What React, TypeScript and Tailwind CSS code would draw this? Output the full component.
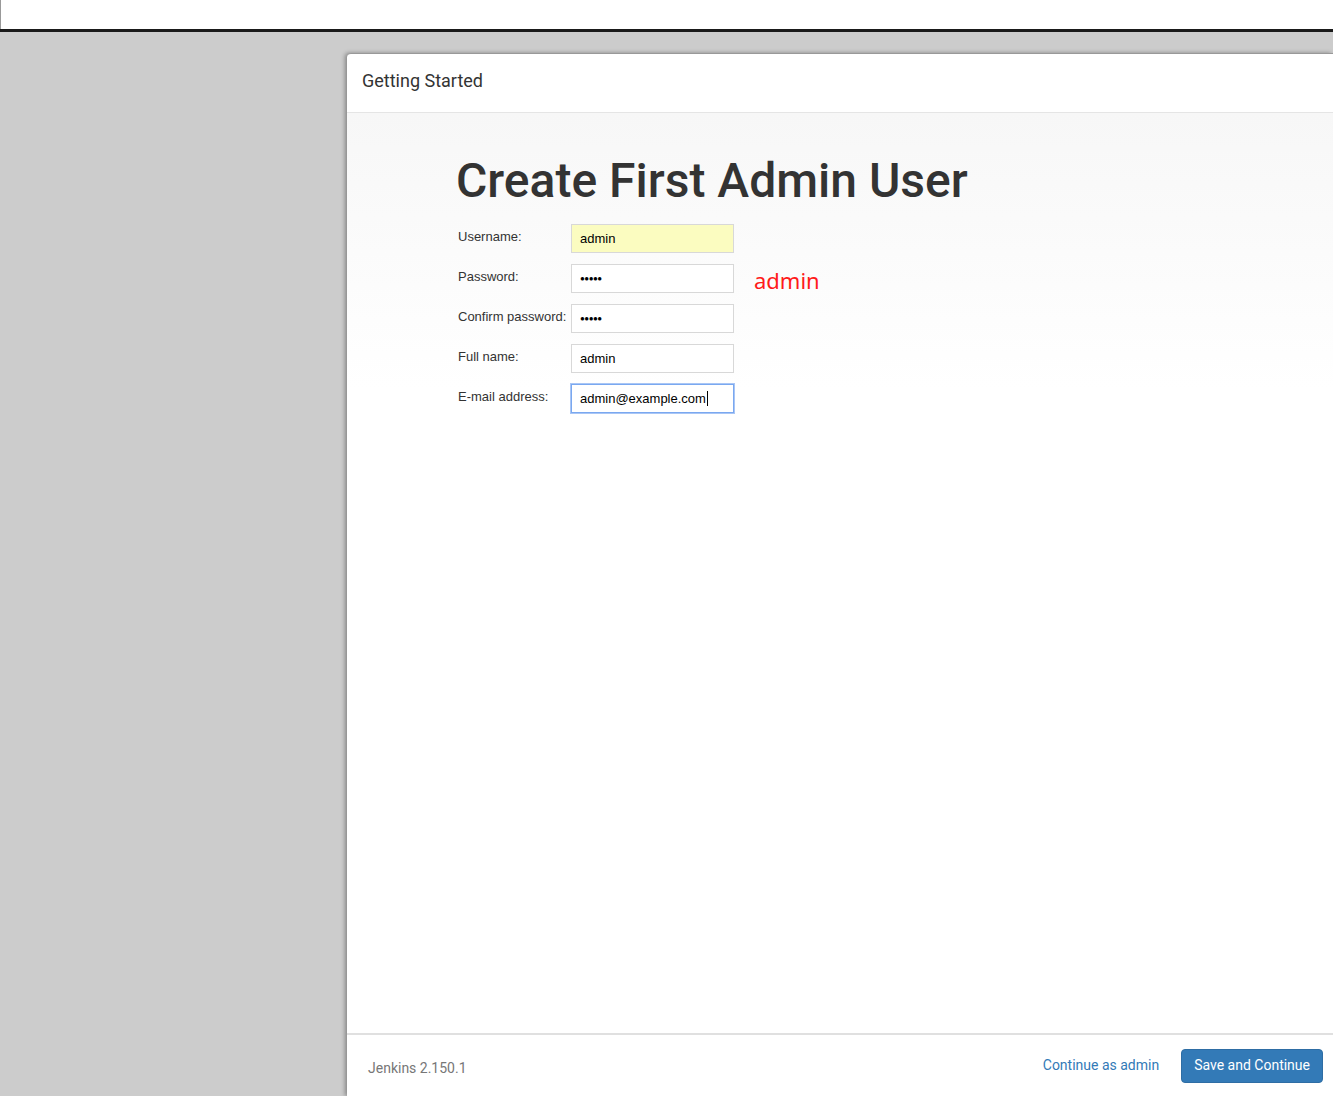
import React from "react";

const fields = [
  { label: "Username:", value: "admin", type: "text", bg: "bg-[#fbfcc0]" },
  { label: "Password:", value: "admin", type: "password" },
  { label: "Confirm password:", value: "admin", type: "password" },
  { label: "Full name:", value: "admin", type: "text" },
  { label: "E-mail address:", value: "admin@example.com", type: "text", focus: true },
];

export default function App() {
  return (
    <div className="w-[1333px] h-[1096px] overflow-hidden bg-[#cccccc] flex flex-col">
      <div className="h-[29px] bg-white border-l border-[#999] shrink-0" />
      <div className="h-[3px] bg-[#1a1a1a] shrink-0" />
      <div className="flex-1 flex pl-[347px] pt-[21px]">
        <div className="flex-1 flex flex-col bg-white rounded-tl-[4px] shadow-[-2px_0_4px_rgba(0,0,0,0.35)] border-t border-[#999]">
          <div className="h-[59px] flex items-center px-[15px] pb-[5px] border-b border-[#e5e5e5] shrink-0">
            <h4 className="text-[18px] text-[#333] font-normal" style={{ fontFamily: "Roboto, sans-serif" }}>
              Getting Started
            </h4>
          </div>
          <div className="flex-1 bg-gradient-to-b from-[#f7f7f7] to-white to-[30%] pl-[109px] pt-[40px]">
            <h1
              className="text-[48px] leading-[56px] text-[#333] font-medium"
              style={{ fontFamily: "Roboto, sans-serif" }}
            >
              Create First Admin User
            </h1>
            <div className="mt-[15px] flex flex-col gap-[11px] pl-[2px]">
              {fields.map((f) => (
                <div key={f.label} className="flex items-start h-[29px]">
                  <div
                    className="w-[113px] pt-[3px] text-[13px] text-[#333]"
                    style={{ fontFamily: "'Liberation Sans', Arial, sans-serif" }}
                  >
                    {f.label}
                  </div>
                  <div
                    className={`w-[163px] h-[29px] flex items-center pl-[8px] text-[13px] text-black border ${
                      f.focus ? "border-[#7aa8f0] shadow-[0_0_0_1px_#a9c6f5]" : "border-[#d8d8d8]"
                    } ${f.bg ?? "bg-white"}`}
                    style={{ fontFamily: "'Liberation Sans', Arial, sans-serif" }}
                  >
                    {f.type === "password" ? (
                      <span className="text-[8px] tracking-[-0.5px] pt-[1px]">●●●●●</span>
                    ) : (
                      <span>{f.value}</span>
                    )}
                    {f.focus && <span className="w-px h-[15px] bg-black ml-px" />}
                  </div>
                  {f.label === "Password:" && (
                    <span
                      className="ml-[20px] mt-[2px] text-[22px] leading-[28px] text-[#ff1a1a]"
                      style={{ fontFamily: "'Noto Sans', sans-serif" }}
                    >
                      admin
                    </span>
                  )}
                </div>
              ))}
            </div>
          </div>
          <div
            className="h-[63px] shrink-0 border-t-2 border-[#e0e0e0] flex items-center pl-[21px] pr-[10px]"
            style={{ fontFamily: "Roboto, sans-serif" }}
          >
            <span className="text-[14px] text-[#777] mt-[5px]">Jenkins 2.150.1</span>
            <div className="ml-auto flex items-center gap-[22px]">
              <span className="text-[14px] text-[#337ab7]">Continue as admin</span>
              <button className="h-[34px] px-[12px] rounded-[4px] bg-[#337ab7] text-white text-[14px] border border-[#2e6da4]">
                Save and Continue
              </button>
            </div>
          </div>
        </div>
      </div>
    </div>
  );
}
